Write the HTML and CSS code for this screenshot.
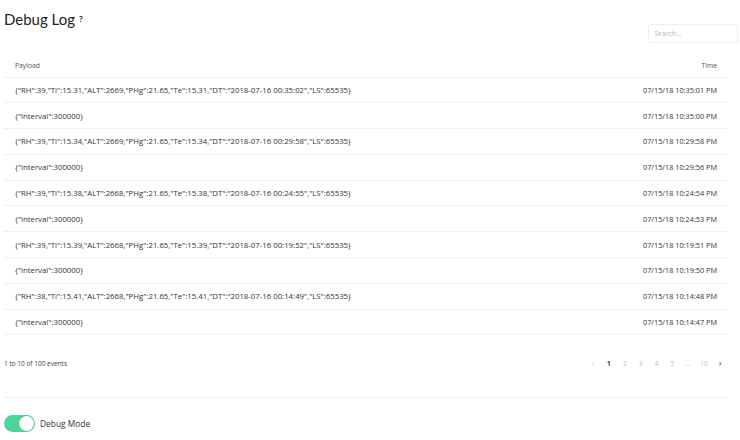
FILE: index.html
```html
<!DOCTYPE html>
<html>
<head>
<meta charset="utf-8">
<link rel="stylesheet" href="styles.css">
</head>
<body>
<div class="page">
  <div class="top">
    <h1 class="title">Debug Log<span class="help">?</span></h1>
    <input class="search" type="text" placeholder="Search...">
  </div>
  <table class="log">
    <thead>
      <tr><th class="c-payload">Payload</th><th class="c-time">Time</th></tr>
    </thead>
    <tbody>
      <tr><td>{"RH":39,"Ti":15.31,"ALT":2669,"PHg":21.65,"Te":15.31,"DT":"2018-07-16 00:35:02","LS":65535}</td><td class="c-time">07/15/18 10:35:01 PM</td></tr>
      <tr><td>{"interval":300000}</td><td class="c-time">07/15/18 10:35:00 PM</td></tr>
      <tr><td>{"RH":39,"Ti":15.34,"ALT":2669,"PHg":21.65,"Te":15.34,"DT":"2018-07-16 00:29:58","LS":65535}</td><td class="c-time">07/15/18 10:29:58 PM</td></tr>
      <tr><td>{"interval":300000}</td><td class="c-time">07/15/18 10:29:56 PM</td></tr>
      <tr><td>{"RH":39,"Ti":15.38,"ALT":2668,"PHg":21.65,"Te":15.38,"DT":"2018-07-16 00:24:55","LS":65535}</td><td class="c-time">07/15/18 10:24:54 PM</td></tr>
      <tr><td>{"interval":300000}</td><td class="c-time">07/15/18 10:24:53 PM</td></tr>
      <tr><td>{"RH":39,"Ti":15.39,"ALT":2668,"PHg":21.65,"Te":15.39,"DT":"2018-07-16 00:19:52","LS":65535}</td><td class="c-time">07/15/18 10:19:51 PM</td></tr>
      <tr><td>{"interval":300000}</td><td class="c-time">07/15/18 10:19:50 PM</td></tr>
      <tr><td>{"RH":38,"Ti":15.41,"ALT":2668,"PHg":21.65,"Te":15.41,"DT":"2018-07-16 00:14:49","LS":65535}</td><td class="c-time">07/15/18 10:14:48 PM</td></tr>
      <tr><td>{"interval":300000}</td><td class="c-time">07/15/18 10:14:47 PM</td></tr>
    </tbody>
  </table>
  <div class="footer">
    <span class="count">1 to 10 of 100 events</span>
    <div class="pager">
      <span class="pg muted">&#8249;</span>
      <span class="pg active">1</span>
      <span class="pg">2</span>
      <span class="pg">3</span>
      <span class="pg">4</span>
      <span class="pg">5</span>
      <span class="pg">&#8230;</span>
      <span class="pg">10</span>
      <span class="pg dark">&#8250;</span>
    </div>
  </div>
  <hr class="divider">
  <label class="toggle-row">
    <span class="switch"><span class="knob"></span></span>
    <span class="toggle-label">Debug Mode</span>
  </label>
</div>
</body>
</html>
```
FILE: styles.css
```css
* { box-sizing: border-box; }
html, body { margin: 0; padding: 0; background: #fff; }
body {
  font-family: "Open Sans", Lato, "Liberation Sans", sans-serif;
  color: #333;
}
.page {
  padding: 0 12px 0 4px;
}
.top {
  display: flex;
  justify-content: space-between;
  align-items: flex-start;
  height: 54px;
}
.title {
  margin: 9px 0 0 0;
  font-family: Lato, "Open Sans", sans-serif;
  font-size: 15px;
  font-weight: 400;
  color: #222;
  line-height: 20px;
}
.help {
  font-size: 8px;
  vertical-align: top;
  font-weight: 700;
  margin-left: 4px;
}
.search {
  margin-top: 24px;
  margin-right: -10px;
  width: 90px;
  height: 19px;
  border: 1px solid #eee;
  border-radius: 2px;
  font-family: inherit;
  font-size: 7px;
  padding: 0 5px;
  color: #555;
  outline: none;
}
.search::placeholder { color: #bbb; }
.log {
  width: 100%;
  border-collapse: collapse;
  font-size: 7.8px;
  color: #333;
}
.log th {
  font-weight: 400;
  font-size: 6.8px;
  color: #555;
  height: 23px;
  padding: 0 11px;
  border-bottom: 1px solid #f0f0f0;
  text-align: left;
}
.log th.c-time { text-align: right; }
.log td {
  height: 25.8px;
  padding: 0 11px;
  border-bottom: 1px solid #f0f0f0;
  white-space: nowrap;
}
.log td.c-time { text-align: right; font-size: 7.3px; }
.footer {
  display: flex;
  justify-content: space-between;
  align-items: center;
  height: 56px;
  font-size: 6.5px;
  color: #444;
}
.pager {
  display: flex;
  margin-right: 0;
}
.pg {
  width: 15.9px;
  text-align: center;
  color: #bbb;
  font-size: 6.3px;
}
.pg.active { color: #333; font-weight: 700; }
.pg.muted { color: #ccc; font-size: 9px; line-height: 8px; }
.pg.dark { color: #444; font-size: 9px; line-height: 8px; }
.divider {
  margin: 6px 0 0 0;
  border: 0;
  border-top: 1px solid #eee;
}
.toggle-row {
  display: flex;
  align-items: center;
  gap: 5px;
  margin-top: 17px;
}
.switch {
  position: relative;
  width: 31px;
  height: 17px;
  border-radius: 9px;
  background: #4cd49a;
}
.knob {
  position: absolute;
  right: 1px;
  top: 1px;
  width: 15px;
  height: 15px;
  border-radius: 50%;
  background: #fff;
  box-shadow: 0 0 1px rgba(0,0,0,0.3);
}
.toggle-label {
  font-size: 8.4px;
  color: #333;
}
```
